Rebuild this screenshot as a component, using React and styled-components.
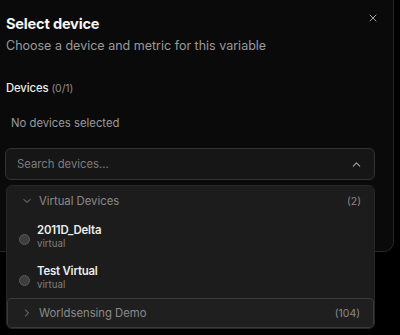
import React from 'react';
import styled, { createGlobalStyle } from 'styled-components';
import { X, ChevronUp, ChevronDown, ChevronRight } from 'lucide-react';

const GlobalStyle = createGlobalStyle`
  html, body {
    margin: 0;
    padding: 0;
    background: #000;
    font-family: Inter, "Noto Sans", sans-serif;
    overflow: hidden;
  }
`;

const Page = styled.div`
  width: 400px;
  height: 335px;
  position: relative;
  overflow: hidden;
`;

const Panel = styled.div`
  width: 414px;
  height: 262px;
  margin: -10px 0 0 -20px;
  box-sizing: border-box;
  padding: 23px 18px 0 25px;
  background: #0a0a0a;
  border: 1px solid #262626;
  border-radius: 10px;
  position: relative;
`;

const CloseButton = styled.button`
  position: absolute;
  top: 21px;
  right: 14px;
  background: none;
  border: none;
  padding: 0;
  color: #a3a3a3;
  display: flex;
`;

const Title = styled.h2`
  margin: 0;
  font-size: 14.6px;
  font-weight: 700;
  color: #f5f5f5;
  line-height: 20px;
  letter-spacing: -0.2px;
`;

const Subtitle = styled.p`
  margin: 3px 0 0;
  font-size: 12.5px;
  color: #9a9a9a;
  line-height: 18px;
`;

const Label = styled.div`
  margin-top: 24px;
  font-size: 11.3px;
  font-weight: 500;
  color: #ededed;
  line-height: 18px;
  letter-spacing: -0.1px;
`;

const Count = styled.span`
  font-size: 10.5px;
  font-weight: 400;
  color: #8a8a8a;
`;

const Empty = styled.div`
  margin: 16px 0 0 5px;
  font-size: 11.3px;
  color: #9a9a9a;
  line-height: 18px;
`;

const SelectWrap = styled.div`
  position: relative;
  margin-top: 16px;
  margin-left: -1px;
`;

const SearchBox = styled.div`
  height: 32px;
  box-sizing: border-box;
  border: 1px solid #333;
  border-radius: 6px;
  background: #161616;
  display: flex;
  align-items: center;
  justify-content: space-between;
  padding: 0 11px 0 11px;
  color: #7d7d7d;
  font-size: 11.3px;
`;

const Popover = styled.div`
  position: absolute;
  top: 37px;
  left: 1px;
  width: 369px;
  box-sizing: border-box;
  background: #1c1c1c;
  border: 1px solid #262626;
  border-radius: 6px;
  padding: 2px 0 0 0;
  overflow: hidden;
`;

const GroupHeader = styled.div`
  display: flex;
  align-items: center;
  height: ${p => (p.$boxed ? '30px' : '26px')};
  box-sizing: border-box;
  padding: 0 13px 0 ${p => (p.$boxed ? '13px' : '14px')};
  color: #8a8a8a;
  font-size: 11.3px;
  ${p => p.$boxed && `
    background: #1f1f1f;
    border: 1px solid #3a3a3a;
    border-radius: 4px;
  `}
`;

const GroupName = styled.span`
  flex: 1;
  margin-left: 6px;
`;

const GroupCount = styled.span`
  font-size: 10.5px;
  color: #8a8a8a;
`;

const List = styled.div`
  padding: 9px 0 7px;
  display: flex;
  flex-direction: column;
  gap: 14px;
`;

const Item = styled.div`
  display: flex;
  align-items: center;
  padding-left: 12px;
  gap: 7px;
`;

const Radio = styled.span`
  width: 9px;
  height: 9px;
  border-radius: 50%;
  background: #3e3e3e;
  border: 1px solid #5a5a5a;
  margin-top: 6px;
`;

const ItemText = styled.div`
  display: flex;
  flex-direction: column;
`;

const ItemName = styled.span`
  font-size: 11.4px;
  font-weight: 600;
  color: #ededed;
  line-height: 15px;
  letter-spacing: -0.2px;
`;

const ItemSub = styled.span`
  font-size: 9.7px;
  color: #7f7f7f;
  line-height: 12px;
`;

const devices = [
  { name: '2011D_Delta', type: 'virtual' },
  { name: 'Test Virtual', type: 'virtual' },
];

export default function App() {
  return (
    <Page>
      <GlobalStyle />
      <Panel>
        <CloseButton><X size={12} strokeWidth={2} /></CloseButton>
        <Title>Select device</Title>
        <Subtitle>Choose a device and metric for this variable</Subtitle>
        <Label>Devices <Count>(0/1)</Count></Label>
        <Empty>No devices selected</Empty>
        <SelectWrap>
          <SearchBox>
            <span>Search devices...</span>
            <ChevronUp size={13} color="#a3a3a3" />
          </SearchBox>
          <Popover>
            <GroupHeader>
              <ChevronDown size={12} color="#8a8a8a" />
              <GroupName>Virtual Devices</GroupName>
              <GroupCount>(2)</GroupCount>
            </GroupHeader>
            <List>
              {devices.map(d => (
                <Item key={d.name}>
                  <Radio />
                  <ItemText>
                    <ItemName>{d.name}</ItemName>
                    <ItemSub>{d.type}</ItemSub>
                  </ItemText>
                </Item>
              ))}
            </List>
            <GroupHeader $boxed>
              <ChevronRight size={12} color="#8a8a8a" />
              <GroupName>Worldsensing Demo</GroupName>
              <GroupCount>(104)</GroupCount>
            </GroupHeader>
          </Popover>
        </SelectWrap>
      </Panel>
    </Page>
  );
}
